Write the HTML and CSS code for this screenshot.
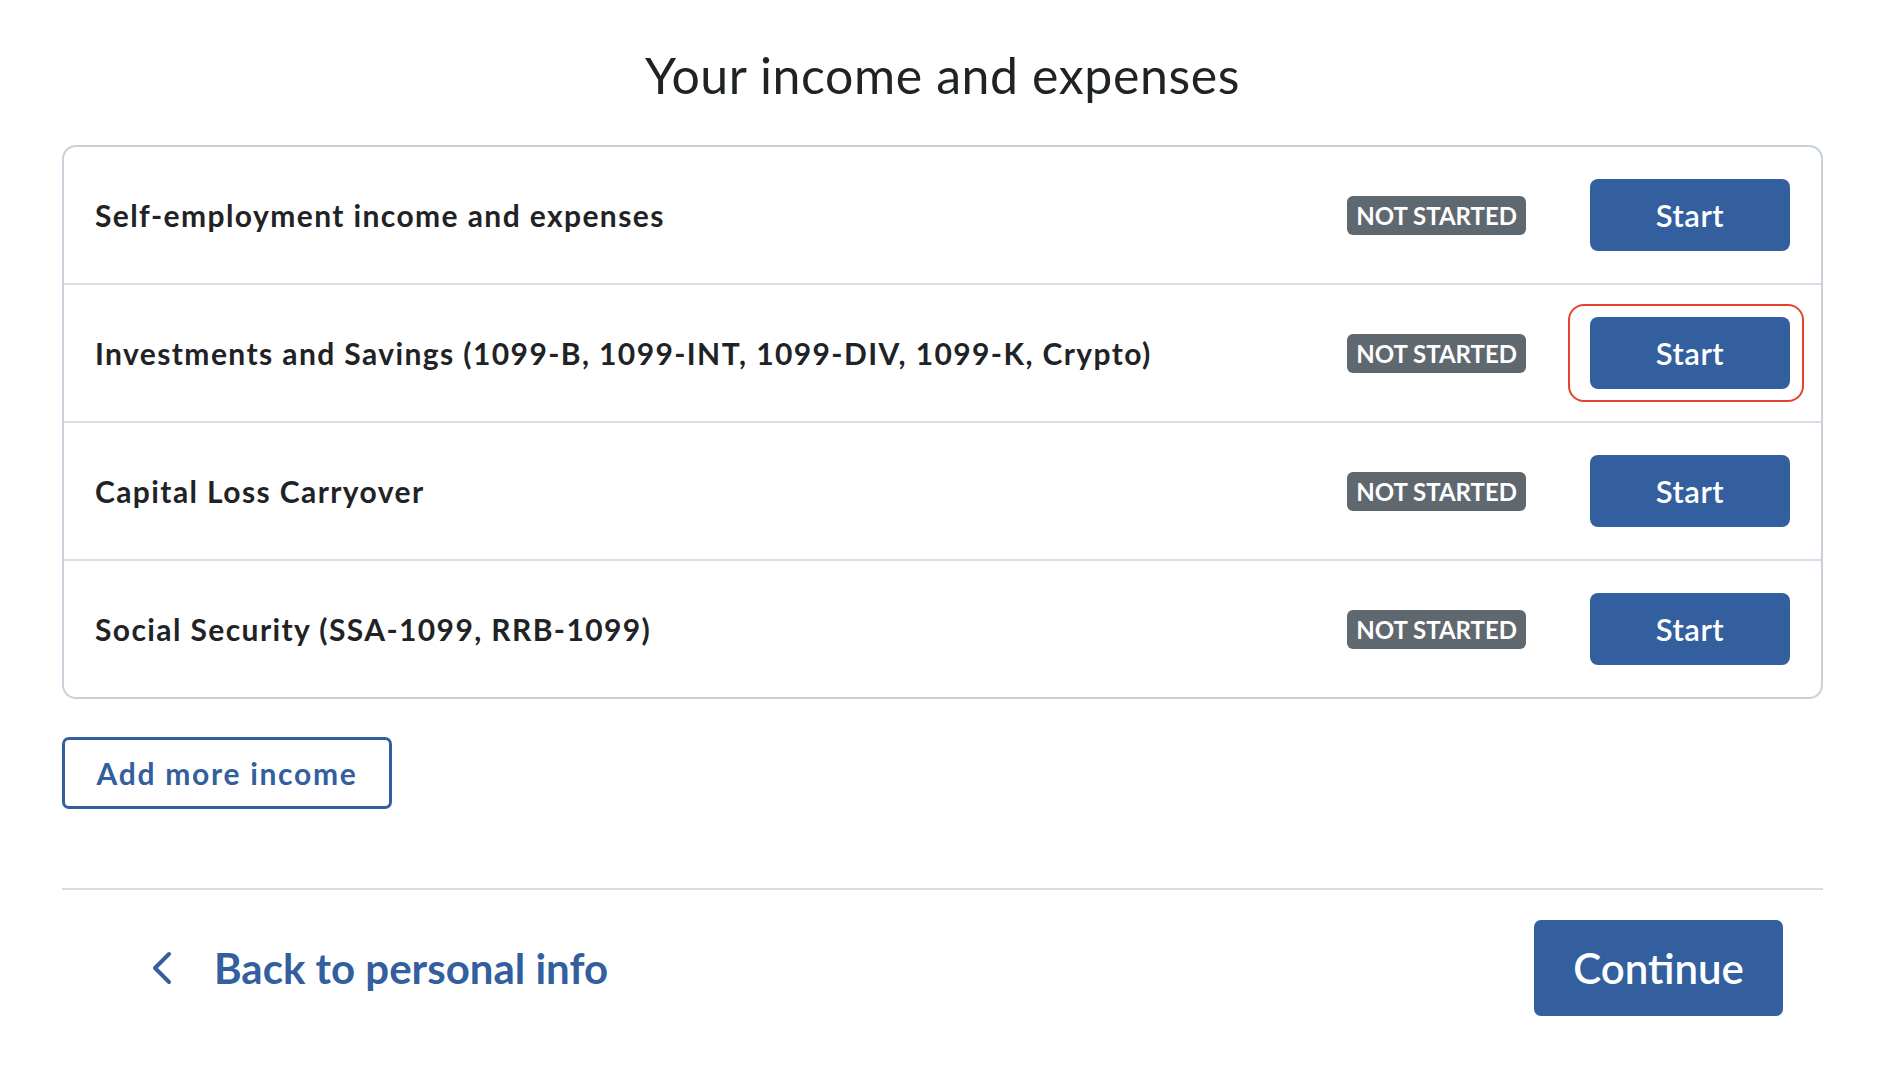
FILE: index.html
```html
<!DOCTYPE html>
<html lang="en">
<head>
    <meta charset="UTF-8">
    <meta name="viewport" content="width=device-width, initial-scale=1.0">
    <title>Your income and expenses</title>
    <link rel="stylesheet" href="styles.css">
</head>
<body>
    <div class="page">
        <h1>Your income and expenses</h1>

        <div class="income-list">
            <div class="income-row">
                <span class="income-name">Self-employment income and expenses</span>
                <span class="status">NOT STARTED</span>
                <button class="start-btn">Start</button>
            </div>
            <div class="income-row">
                <span class="income-name">Investments and Savings (1099-B, 1099-INT, 1099-DIV, 1099-K, Crypto)</span>
                <span class="status">NOT STARTED</span>
                <span class="focus-ring">
                    <button class="start-btn">Start</button>
                </span>
            </div>
            <div class="income-row">
                <span class="income-name">Capital Loss Carryover</span>
                <span class="status">NOT STARTED</span>
                <button class="start-btn">Start</button>
            </div>
            <div class="income-row">
                <span class="income-name">Social Security (SSA-1099, RRB-1099)</span>
                <span class="status">NOT STARTED</span>
                <button class="start-btn">Start</button>
            </div>
        </div>

        <button class="add-btn">Add more income</button>

        <div class="footer">
            <a href="#" class="back-link">
                <svg width="22" height="34" viewBox="0 0 22 34">
                    <path d="M17 3 L3 17 L17 31" fill="none" stroke="#335f9f" stroke-width="4" stroke-linecap="round" stroke-linejoin="round"/>
                </svg>
                Back to personal info
            </a>
            <button class="continue-btn">Continue</button>
        </div>
    </div>
</body>
</html>
```

FILE: styles.css
```css
body {
    margin: 0;
    font-family: Lato, "Open Sans", Arial, sans-serif;
    color: #1f2326;
    background-color: white;
}
.page {
    padding: 0 61px 0 62px;
}
h1 {
    margin: 0;
    padding-top: 45px;
    height: 145px;
    box-sizing: border-box;
    text-align: center;
    font-size: 50px;
    font-weight: 400;
    line-height: 60px;
    letter-spacing: 0.6px;
}
.income-list {
    border: 2px solid #c8d1da;
    border-radius: 14px;
}
.income-row {
    display: flex;
    align-items: center;
    height: 136px;
    padding: 0 31px;
    border-bottom: 2px solid #d8dee3;
}
.income-row:last-child {
    border-bottom: none;
}
.income-name {
    flex: 1;
    font-size: 30px;
    font-weight: 700;
    letter-spacing: 1.4px;
}
.status {
    background-color: #5f676f;
    color: white;
    font-size: 24px;
    font-weight: 700;
    line-height: 39px;
    padding: 0 9px;
    border-radius: 6px;
    margin-right: 64px;
}
.start-btn {
    width: 200px;
    height: 72px;
    border: none;
    border-radius: 8px;
    background-color: #335f9f;
    color: white;
    font-family: inherit;
    font-size: 31px;
    font-weight: 600;
    letter-spacing: 0.5px;
    cursor: pointer;
}
.focus-ring {
    display: flex;
    margin: -13px -14px -13px -22px;
    padding: 11px 12px 11px 20px;
    border: 2px solid #e5432b;
    border-radius: 16px;
}
.add-btn {
    margin-top: 38px;
    width: 330px;
    height: 72px;
    border: 3px solid #335f9f;
    border-radius: 7px;
    background-color: white;
    color: #335f9f;
    font-family: inherit;
    font-size: 30px;
    font-weight: 700;
    letter-spacing: 1.7px;
    cursor: pointer;
}
.footer {
    margin-top: 79px;
    border-top: 2px solid #d6dce1;
    display: flex;
    align-items: center;
    justify-content: space-between;
    padding: 30px 40px 0 90px;
}
.back-link {
    display: flex;
    align-items: center;
    gap: 40px;
    color: #335f9f;
    text-decoration: none;
    font-size: 42px;
    font-weight: 700;
}
.continue-btn {
    width: 249px;
    height: 96px;
    border: none;
    border-radius: 7px;
    background-color: #335f9f;
    color: white;
    font-family: inherit;
    font-size: 42px;
    font-weight: 600;
    cursor: pointer;
}
```
